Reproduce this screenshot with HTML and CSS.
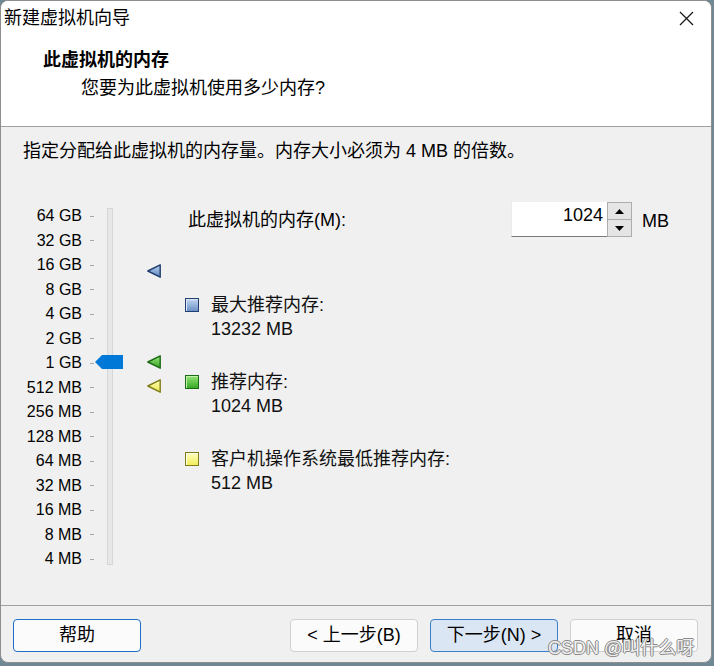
FILE: index.html
```html
<!DOCTYPE html>
<html lang="zh-CN">
<head>
<meta charset="utf-8">
<title>新建虚拟机向导</title>
<link rel="stylesheet" href="styles.css">
</head>
<body>
<div class="window">
  <header class="header">
    <div class="titlebar">
      <span class="title">新建虚拟机向导</span>
      <svg class="close" width="15" height="15" viewBox="0 0 15 15"><path d="M1 1 L14 14 M14 1 L1 14" stroke="#1a1a1a" stroke-width="1.3" fill="none"/></svg>
    </div>
    <div class="heading">此虚拟机的内存</div>
    <div class="subheading">您要为此虚拟机使用多少内存?</div>
  </header>
  <main class="panel">
    <p class="hint">指定分配给此虚拟机的内存量。内存大小必须为 4 MB 的倍数。</p>
    <div class="content">
      <div class="slider">
        <ul class="scale">
          <li class="lbl">64 GB</li><li class="tick"></li>
          <li class="lbl">32 GB</li><li class="tick"></li>
          <li class="lbl">16 GB</li><li class="tick"></li>
          <li class="lbl">8 GB</li><li class="tick"></li>
          <li class="lbl">4 GB</li><li class="tick"></li>
          <li class="lbl">2 GB</li><li class="tick"></li>
          <li class="lbl">1 GB</li><li class="tick"></li>
          <li class="lbl">512 MB</li><li class="tick"></li>
          <li class="lbl">256 MB</li><li class="tick"></li>
          <li class="lbl">128 MB</li><li class="tick"></li>
          <li class="lbl">64 MB</li><li class="tick"></li>
          <li class="lbl">32 MB</li><li class="tick"></li>
          <li class="lbl">16 MB</li><li class="tick"></li>
          <li class="lbl">8 MB</li><li class="tick"></li>
          <li class="lbl">4 MB</li><li class="tick"></li>
        </ul>
        <div class="track"><div class="thumb"></div></div>
        <svg class="marker marker-max" width="14" height="14" viewBox="0 0 14 14">
          <defs><linearGradient id="gb" x1="0" y1="0" x2="0" y2="1"><stop offset="0" stop-color="#b9d0ee"/><stop offset="1" stop-color="#5d86c0"/></linearGradient></defs>
          <polygon points="0.8,7 13.2,0.8 13.2,13.2" fill="url(#gb)" stroke="#1f3d6e" stroke-width="1.4" stroke-linejoin="round"/>
        </svg>
        <svg class="marker marker-rec" width="14" height="14" viewBox="0 0 14 14">
          <defs><linearGradient id="gg" x1="0" y1="0" x2="0" y2="1"><stop offset="0" stop-color="#9be47c"/><stop offset="1" stop-color="#34a323"/></linearGradient></defs>
          <polygon points="0.8,7 13.2,0.8 13.2,13.2" fill="url(#gg)" stroke="#1b6b16" stroke-width="1.4" stroke-linejoin="round"/>
        </svg>
        <svg class="marker marker-min" width="14" height="14" viewBox="0 0 14 14">
          <defs><linearGradient id="gy" x1="0" y1="0" x2="0" y2="1"><stop offset="0" stop-color="#ffffb8"/><stop offset="1" stop-color="#ece84a"/></linearGradient></defs>
          <polygon points="0.8,7 13.2,0.8 13.2,13.2" fill="url(#gy)" stroke="#807c1c" stroke-width="1.4" stroke-linejoin="round"/>
        </svg>
      </div>
      <div class="settings">
        <div class="mem-row">
          <span class="mem-label">此虚拟机的内存(M):</span>
          <div class="spin">
            <div class="spin-input">1024</div>
            <div class="spin-btns">
              <div class="spin-btn"><svg width="9" height="5" viewBox="0 0 9 5"><polygon points="4.5,0 9,5 0,5" fill="#000"/></svg></div>
              <div class="spin-btn"><svg width="9" height="5" viewBox="0 0 9 5"><polygon points="0,0 9,0 4.5,5" fill="#000"/></svg></div>
            </div>
          </div>
          <span class="unit">MB</span>
        </div>
        <div class="legend">
          <div class="item">
            <span class="swatch swatch-max"></span>
            <div class="item-text"><div>最大推荐内存:</div><div>13232 MB</div></div>
          </div>
          <div class="item">
            <span class="swatch swatch-rec"></span>
            <div class="item-text"><div>推荐内存:</div><div>1024 MB</div></div>
          </div>
          <div class="item">
            <span class="swatch swatch-min"></span>
            <div class="item-text"><div>客户机操作系统最低推荐内存:</div><div>512 MB</div></div>
          </div>
        </div>
      </div>
    </div>
  </main>
  <footer class="footer">
    <button class="btn btn-help">帮助</button>
    <button class="btn btn-back">&lt; 上一步(B)</button>
    <button class="btn btn-next">下一步(N) &gt;</button>
    <button class="btn">取消</button>
  </footer>
  <div class="watermark">CSDN @叫什么呀</div>
</div>
</body>
</html>
```
FILE: styles.css
```css
html, body {
  margin: 0;
  padding: 0;
}
body {
  background: #6f8894;
  font-family: "Liberation Sans", "Noto Sans CJK SC", sans-serif;
  font-size: 18px;
  color: #000;
}
.window {
  position: relative;
  width: 712px;
  height: 663px;
  box-sizing: border-box;
  border: 1px solid #8e8e8e;
  border-radius: 8px;
  overflow: hidden;
  background: #f0f0f0;
  display: flex;
  flex-direction: column;
}
.header {
  background: #fff;
  height: 126px;
  flex: none;
  box-sizing: border-box;
  border-bottom: 1px solid #a0a0a0;
}
.titlebar {
  height: 36px;
  display: flex;
  align-items: center;
  justify-content: space-between;
  padding: 0 17px 0 3px;
}
.title {
  line-height: 24px;
  margin-top: -2px;
}
.close {
  display: block;
  margin-top: -2px;
}
.heading {
  margin: 11px 0 0 42px;
  line-height: 24px;
  font-weight: 700;
}
.subheading {
  margin: 4px 0 0 80px;
  line-height: 24px;
}
.panel {
  flex: 1;
  padding-top: 12px;
}
.hint {
  margin: 0;
  padding-left: 22px;
  line-height: 24px;
}
.content {
  display: flex;
  margin-top: 39px;
}
.slider {
  position: relative;
  width: 169px;
  flex: none;
  display: flex;
  align-items: flex-start;
}
.scale {
  list-style: none;
  margin: 1.75px 0 0;
  padding: 0;
  width: 93px;
  display: grid;
  grid-template-columns: 81px 12px;
  grid-auto-rows: 24.5px;
  align-items: center;
}
.lbl {
  text-align: right;
  font-size: 16px;
  line-height: 22px;
  white-space: nowrap;
}
.tick {
  margin-left: 8px;
  width: 4px;
  height: 1px;
  background: #a8a8a8;
}
.track {
  position: relative;
  margin: 6px 0 0 13px;
  width: 6px;
  height: 357px;
  box-sizing: border-box;
  border: 1px solid #d6d6d6;
  background: #e7e7e7;
}
.thumb {
  position: absolute;
  left: -13px;
  top: 146px;
  width: 28px;
  height: 14px;
  background: #0078d7;
  clip-path: polygon(0 50%, 7px 0, 100% 0, 100% 100%, 7px 100%);
}
.marker {
  position: absolute;
  left: 146px;
  display: block;
}
.marker-max { top: 62px; }
.marker-rec { top: 153px; }
.marker-min { top: 177px; }
.settings {
  padding-left: 15px;
}
.mem-row {
  display: flex;
  align-items: center;
  height: 35px;
  padding-left: 3px;
}
.mem-label {
  width: 323px;
  line-height: 24px;
  white-space: nowrap;
}
.spin {
  display: flex;
  height: 35px;
}
.spin-input {
  width: 96px;
  box-sizing: border-box;
  background: #fff;
  border-left: 1px solid #ececec;
  border-bottom: 1px solid #7a7a7a;
  text-align: right;
  padding-right: 4px;
  line-height: 26px;
}
.spin-btns {
  width: 25px;
  display: flex;
  flex-direction: column;
}
.spin-btn {
  flex: 1;
  box-sizing: border-box;
  border: 1px solid #adadad;
  background: #e5e5e5;
  display: flex;
  align-items: center;
  justify-content: center;
}
.spin-btn + .spin-btn {
  border-top: none;
}
.spin-btn svg {
  display: block;
}
.unit {
  margin-left: 10px;
  line-height: 24px;
  margin-top: 2px;
}
.legend {
  margin-top: 56px;
  display: flex;
  flex-direction: column;
  gap: 29px;
}
.item {
  display: grid;
  grid-template-columns: 14px auto;
  column-gap: 12px;
  line-height: 24px;
  color: #111;
}
.swatch {
  width: 14px;
  height: 14px;
  margin-top: 5px;
  box-sizing: border-box;
  border: 1px solid;
}
.swatch-max {
  border-color: #1f3d6e;
  background: linear-gradient(#c4d7f0, #6a91c8);
  box-shadow: inset 1px 1px 0 #dbe7f7;
}
.swatch-rec {
  border-color: #1b6b16;
  background: linear-gradient(#95e474, #36a825);
  box-shadow: inset 1px 1px 0 #c2f2a8;
}
.swatch-min {
  border-color: #807c1c;
  background: linear-gradient(#ffffc4, #f2ee5a);
  box-shadow: inset 1px 1px 0 #ffffe2;
}
.footer {
  flex: none;
  height: 57px;
  box-sizing: border-box;
  border-top: 1px solid #a0a0a0;
  display: flex;
  align-items: flex-start;
  gap: 12px;
  padding: 13px 13px 0 12px;
}
.btn {
  width: 128px;
  height: 33px;
  box-sizing: border-box;
  border: 1px solid #d0d0d0;
  border-radius: 4px;
  background: #fbfbfb;
  font-family: inherit;
  font-size: 18px;
  line-height: 31px;
  padding: 0;
  color: #000;
}
.btn-help {
  border-color: #1b6fc8;
  margin-right: auto;
}
.btn-next {
  background: #dae6f3;
  border-color: #3b7fc9;
}
.watermark {
  position: absolute;
  left: 547px;
  top: 635px;
  line-height: 24px;
  font-size: 18px;
  color: rgba(255, 255, 255, 0.9);
  text-shadow: 1px 0 0 #8a8a8a, -1px 0 0 #8a8a8a, 0 1px 0 #8a8a8a, 0 -1px 0 #8a8a8a;
  white-space: nowrap;
}
```
